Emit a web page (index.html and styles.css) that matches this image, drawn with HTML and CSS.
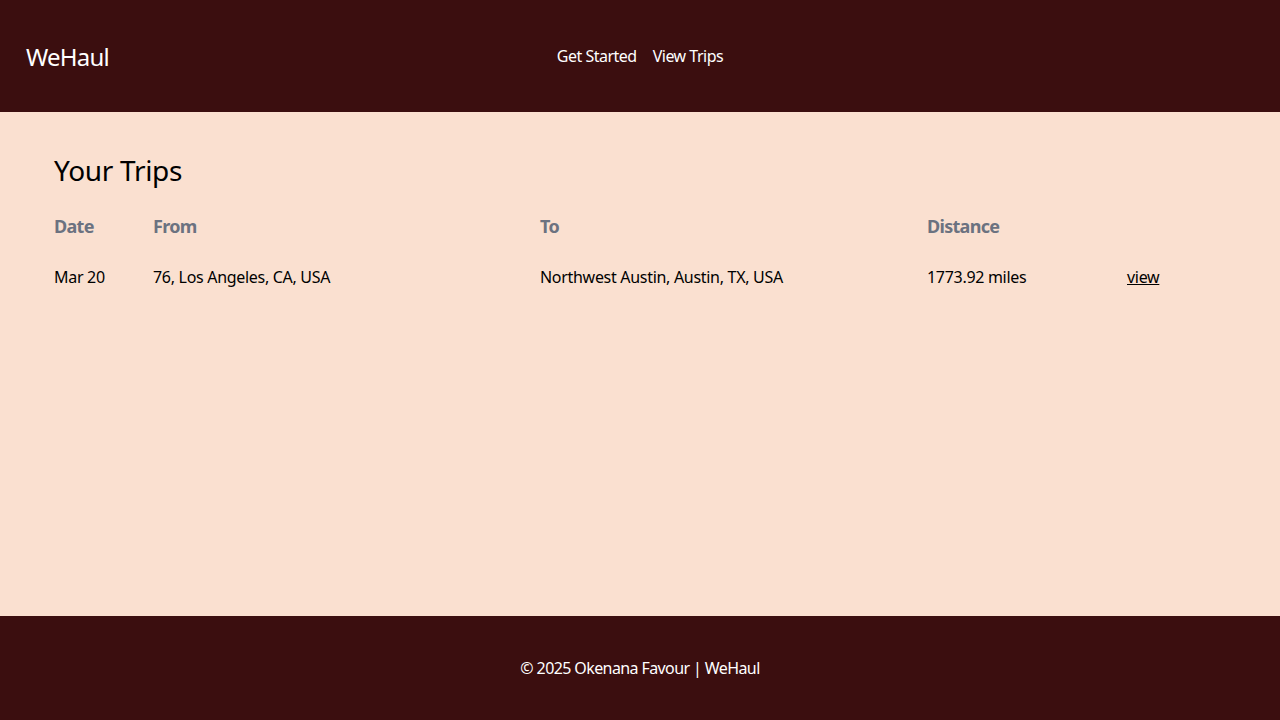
FILE: index.html
```html
<!DOCTYPE html>
<html lang="en">
<head>
<meta charset="utf-8">
<title>WeHaul - Your Trips</title>
<link rel="stylesheet" href="styles.css">
</head>
<body>
<header class="site-header">
  <div class="logo">WeHaul</div>
  <nav class="nav">
    <a href="#" class="nav-link">Get Started</a>
    <a href="#" class="nav-link">View Trips</a>
  </nav>
  <div class="spacer"></div>
</header>
<main class="content">
  <h1 class="title">Your Trips</h1>
  <table class="trips">
    <colgroup>
      <col class="c-date"><col class="c-from"><col class="c-to"><col class="c-dist"><col class="c-act">
    </colgroup>
    <thead>
      <tr><th>Date</th><th>From</th><th>To</th><th>Distance</th><th></th></tr>
    </thead>
    <tbody>
      <tr>
        <td>Mar 20</td>
        <td>76, Los Angeles, CA, USA</td>
        <td>Northwest Austin, Austin, TX, USA</td>
        <td>1773.92 miles</td>
        <td><a href="#" class="view-link">view</a></td>
      </tr>
    </tbody>
  </table>
</main>
<footer class="site-footer">© 2025 Okenana Favour | WeHaul</footer>
</body>
</html>
```
FILE: styles.css
```css
* { box-sizing: border-box; }
html, body { margin: 0; padding: 0; }
body {
  font-family: "Noto Sans", "Open Sans", sans-serif;
  font-size: 16px;
  letter-spacing: -0.3px;
  min-height: 100vh;
  display: flex;
  flex-direction: column;
  background: #fae0d0;
  color: #000;
}
.site-header {
  height: 112px;
  background: #3b0e0f;
  color: #fff;
  display: grid;
  grid-template-columns: 1fr auto 1fr;
  align-items: center;
  padding: 0 26px;
}
.logo { font-size: 24px; letter-spacing: -0.8px; }
.nav { display: flex; gap: 16px; }
.nav-link { color: #fff; text-decoration: none; font-size: 16px; letter-spacing: -0.5px; }
.content { flex: 1; padding: 42px 54px 0; }
.title {
  font-size: 28px;
  font-weight: 400;
  letter-spacing: -0.3px;
  margin: 0 0 26px;
  line-height: 1.2;
}
.trips { width: 100%; border-collapse: collapse; }
.c-date { width: 99px; }
.c-from { width: 387px; }
.c-to { width: 387px; }
.c-dist { width: 200px; }
.trips th {
  text-align: left;
  font-size: 18px;
  font-weight: 700;
  letter-spacing: -0.7px;
  color: #6b7280;
  padding: 0 0 12px;
  line-height: 24px;
}
.trips td { padding: 15px 0 13px; line-height: 24px; }
.view-link { color: #000; }
.site-footer {
  height: 104px;
  background: #3b0e0f;
  color: #fff;
  letter-spacing: -0.6px;
  display: flex;
  align-items: center;
  justify-content: center;
}
```
